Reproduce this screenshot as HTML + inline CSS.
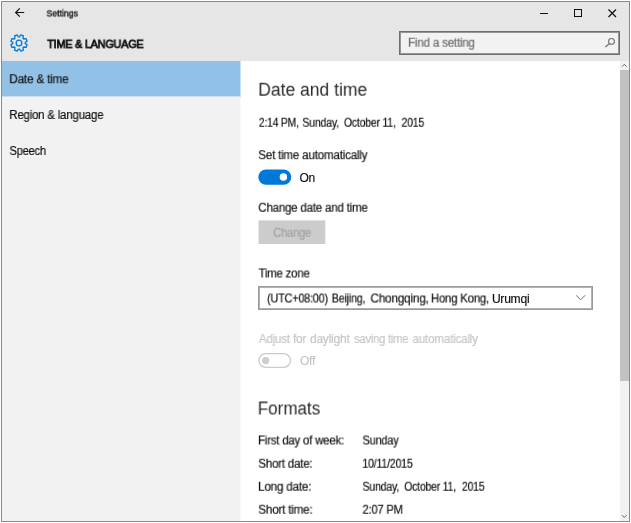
<!DOCTYPE html>
<html><head><meta charset="utf-8"><title>Settings</title>
<style>
html,body{margin:0;padding:0;background:#fff;}
body{width:631px;height:523px;overflow:hidden;position:relative;font-family:"Liberation Sans",sans-serif;}
.abs{position:absolute;}
.t{will-change:transform;position:absolute;white-space:pre;line-height:1;transform-origin:0 0;font-family:"Liberation Sans",sans-serif;}
#win{left:1px;top:1px;width:627px;height:519px;border:1px solid #4e9ad9;background:#fff;box-sizing:content-box;}
#hdr{left:2px;top:2px;width:627px;height:59px;background:#e6e6e6;}
#side{left:2px;top:61px;width:238px;height:460px;background:#f2f2f2;border-right:1px solid #f8f8f8;}
#sel{left:2px;top:61px;width:238px;height:35px;background:#91c1e7;border-right:1px solid #c8e0f3;border-bottom:1px solid #cbdeee;}
#sbar{left:620px;top:61px;width:9px;height:460px;background:#f2f2f2;}
#thumb{left:620px;top:70px;width:9px;height:311px;background:#c2c2c2;}
#search{left:399px;top:31px;width:221px;height:24px;box-sizing:border-box;background:#f2f2f2;box-shadow:inset 0 0 0 1px #6e6e6e, inset 0 0 0 2px rgba(110,110,110,0.7);}
#selbox{left:258px;top:286px;width:335px;height:24px;box-sizing:border-box;background:#fff;box-shadow:inset 0 0 0 1px #999, inset 0 0 0 2px rgba(153,153,153,0.75);}
svg{position:absolute;overflow:visible;}
</style></head><body>
<div id="win" class="abs"></div>
<div id="hdr" class="abs"></div>
<div id="side" class="abs"></div>
<div id="sel" class="abs"></div>
<div id="sbar" class="abs"></div>
<div id="thumb" class="abs"></div>
<div id="search" class="abs"></div>
<div id="selbox" class="abs"></div>

<!-- shapes -->
<svg style="left:0;top:0" width="631" height="523" viewBox="0 0 631 523">
<rect x="258.3" y="169.4" width="33" height="15.3" rx="7.65" fill="#0078d7"/>
<circle cx="283.4" cy="177.05" r="3.75" fill="#fff"/>
<rect x="258.5" y="220.4" width="66.8" height="23.6" fill="#cccccc"/>
<rect x="258.9" y="353.7" width="31.6" height="13.6" rx="6.8" fill="#fff" stroke="#cbcbcb" stroke-width="1.3"/>
<circle cx="265.7" cy="360.6" r="3.6" fill="#cdcdcd"/>
</svg>
<!-- back arrow -->
<svg style="left:15px;top:8px" width="10" height="9" viewBox="0 0 10 9"><path d="M9.2 4.5H0.6M4.8 0.3L0.6 4.5L4.8 8.7" fill="none" stroke="#111" stroke-width="1.2"/></svg>
<!-- window controls -->
<svg style="left:540px;top:8px" width="80" height="10" viewBox="0 0 80 10">
<path d="M0 5.5H8" stroke="#111" stroke-width="1" fill="none"/>
<rect x="34.5" y="1.5" width="7" height="7" stroke="#111" stroke-width="1" fill="none"/>
<path d="M68.5 1.5L76 9M76 1.5L68.5 9" stroke="#111" stroke-width="1.2" fill="none"/>
</svg>
<!-- gear -->
<svg style="left:10.3px;top:33.5px" width="18" height="18" viewBox="0 0 18 18"><path fill="none" stroke="#0078d7" stroke-width="1.3" stroke-linejoin="round" d="M9.53 2.82L10.87 0.91L13.39 1.96L12.99 4.25L13.75 5.01L16.04 4.61L17.09 7.13L15.18 8.47L15.18 9.53L17.09 10.87L16.04 13.39L13.75 12.99L12.99 13.75L13.39 16.04L10.87 17.09L9.53 15.18L8.47 15.18L7.13 17.09L4.61 16.04L5.01 13.75L4.25 12.99L1.96 13.39L0.91 10.87L2.82 9.53L2.82 8.47L0.91 7.13L1.96 4.61L4.25 5.01L5.01 4.25L4.61 1.96L7.13 0.91L8.47 2.82Z"/><circle cx="9" cy="9" r="2.85" fill="none" stroke="#0078d7" stroke-width="1.3"/></svg>
<!-- magnifier -->
<svg style="left:605px;top:38px" width="10" height="10" viewBox="0 0 10 10"><circle cx="6.5" cy="3.4" r="2.9" fill="none" stroke="#727272" stroke-width="1.1"/><path d="M4.5 5.5L0.4 9" stroke="#727272" stroke-width="1.2" fill="none"/></svg>
<!-- chevron -->
<svg style="left:575.8px;top:295px" width="9.4" height="5.2" viewBox="0 0 9.4 5.2"><path d="M0.2 0.3L4.7 4.8L9.2 0.3" fill="none" stroke="#666" stroke-width="1"/></svg>
<!-- scrollbar arrows -->
<svg style="left:622.3px;top:63.8px" width="4.6" height="2.8" viewBox="0 0 4.6 2.8"><path d="M0 2.6L2.3 0.3L4.6 2.6" fill="none" stroke="#555" stroke-width="0.9"/></svg>
<svg style="left:622.3px;top:515.2px" width="4.6" height="2.8" viewBox="0 0 4.6 2.8"><path d="M0 0.2L2.3 2.5L4.6 0.2" fill="none" stroke="#555" stroke-width="0.9"/></svg>

<span class="t" style="left:45px;top:6px;font-size:9.8px;color:#000;-webkit-text-stroke:0.3px #000;transform:translate(1.45px,2.40px) scaleX(0.8914)">Settings</span>
<span class="t" style="left:46px;top:36px;font-size:11.2px;color:#111;-webkit-text-stroke:0.8px #111;letter-spacing:-0.25px;transform:translate(1.25px,2.85px) scaleX(0.9733)">TIME &amp; LANGUAGE</span>
<span class="t" style="left:407px;top:35px;font-size:12px;color:#6b6b6b;-webkit-text-stroke:0.18px #6b6b6b;letter-spacing:-0.25px;transform:translate(1.00px,1.75px) scaleX(0.9741)">Find a setting</span>
<span class="t" style="left:9px;top:72px;font-size:12px;color:#111;-webkit-text-stroke:0.18px #111;letter-spacing:-0.25px;transform:translate(0.25px,1.25px) scaleX(0.9873)">Date &amp; time</span>
<span class="t" style="left:9px;top:107px;font-size:12px;color:#111;-webkit-text-stroke:0.18px #111;letter-spacing:-0.25px;transform:translate(0.25px,2.00px) scaleX(0.9613)">Region &amp; language</span>
<span class="t" style="left:9px;top:143px;font-size:12px;color:#111;-webkit-text-stroke:0.18px #111;letter-spacing:-0.25px;transform:translate(0.50px,2.00px) scaleX(0.9281)">Speech</span>
<span class="t" style="left:258px;top:79px;font-size:17.6px;color:#2a2a2a;transform:translate(0.25px,2.70px) scaleX(0.9944)">Date and time</span>
<span class="t" style="left:258px;top:115px;font-size:12px;color:#111;-webkit-text-stroke:0.18px #111;letter-spacing:-0.25px;transform:translate(0.85px,1.70px) scaleX(0.8637)">2:14 PM, </span>
<span class="t" style="left:301px;top:115px;font-size:12px;color:#111;-webkit-text-stroke:0.18px #111;letter-spacing:-0.25px;transform:translate(1.35px,1.70px) scaleX(0.8820)">Sunday, </span>
<span class="t" style="left:343px;top:115px;font-size:12px;color:#111;-webkit-text-stroke:0.18px #111;letter-spacing:-0.25px;transform:translate(0.90px,1.70px) scaleX(0.8762)">October 11, </span>
<span class="t" style="left:401px;top:115px;font-size:12px;color:#111;-webkit-text-stroke:0.18px #111;letter-spacing:-0.25px;transform:translate(0.50px,1.70px) scaleX(0.8760)">2015</span>
<span class="t" style="left:257px;top:148px;font-size:12px;color:#111;-webkit-text-stroke:0.18px #111;letter-spacing:-0.25px;transform:translate(1.25px,1.15px) scaleX(0.9732)">Set time automatically</span>
<span class="t" style="left:299px;top:170px;font-size:12px;color:#111;-webkit-text-stroke:0.18px #111;letter-spacing:-0.25px;transform:translate(0.50px,1.75px) scaleX(1.0000)">On</span>
<span class="t" style="left:257px;top:200px;font-size:12px;color:#111;-webkit-text-stroke:0.18px #111;letter-spacing:-0.25px;transform:translate(1.25px,1.75px) scaleX(0.9667)">Change date and time</span>
<span class="t" style="left:272px;top:225px;font-size:12px;color:#a0a0a0;-webkit-text-stroke:0.18px #a0a0a0;letter-spacing:-0.25px;transform:translate(1.25px,1.75px) scaleX(0.9308)">Change</span>
<span class="t" style="left:257px;top:266px;font-size:12px;color:#111;-webkit-text-stroke:0.18px #111;letter-spacing:-0.25px;transform:translate(1.50px,1.50px) scaleX(0.9573)">Time zone</span>
<span class="t" style="left:266px;top:291px;font-size:12px;color:#111;-webkit-text-stroke:0.18px #111;letter-spacing:-0.25px;transform:translate(1.00px,1.50px) scaleX(0.9095)">(UTC+08:00) </span>
<span class="t" style="left:331px;top:291px;font-size:12px;color:#111;-webkit-text-stroke:0.18px #111;letter-spacing:-0.25px;transform:translate(0.70px,1.50px) scaleX(0.9008)">Beijing, </span>
<span class="t" style="left:369px;top:291px;font-size:12px;color:#111;-webkit-text-stroke:0.18px #111;letter-spacing:-0.25px;transform:translate(1.45px,1.50px) scaleX(0.9862)">Chongqing, </span>
<span class="t" style="left:430px;top:291px;font-size:12px;color:#111;-webkit-text-stroke:0.18px #111;letter-spacing:-0.25px;transform:translate(0.85px,1.50px) scaleX(0.9555)">Hong Kong, </span>
<span class="t" style="left:491px;top:291px;font-size:12px;color:#111;-webkit-text-stroke:0.18px #111;letter-spacing:-0.25px;transform:translate(0.90px,1.50px) scaleX(1.0070)">Urumqi</span>
<span class="t" style="left:257px;top:331px;font-size:12px;color:#c6c6c6;-webkit-text-stroke:0.18px #c6c6c6;letter-spacing:-0.25px;transform:translate(1.75px,2.00px) scaleX(0.9793)">Adjust for </span>
<span class="t" style="left:309px;top:331px;font-size:12px;color:#c6c6c6;-webkit-text-stroke:0.18px #c6c6c6;letter-spacing:-0.25px;transform:translate(0.95px,2.00px) scaleX(1.0052)">daylight </span>
<span class="t" style="left:353px;top:331px;font-size:12px;color:#c6c6c6;-webkit-text-stroke:0.18px #c6c6c6;letter-spacing:-0.25px;transform:translate(1.10px,2.00px) scaleX(0.9339)">saving time </span>
<span class="t" style="left:411px;top:331px;font-size:12px;color:#c6c6c6;-webkit-text-stroke:0.18px #c6c6c6;letter-spacing:-0.25px;transform:translate(1.45px,2.00px) scaleX(0.9782)">automatically</span>
<span class="t" style="left:299px;top:353px;font-size:12px;color:#c6c6c6;-webkit-text-stroke:0.18px #c6c6c6;letter-spacing:-0.25px;transform:translate(1.00px,2.00px) scaleX(1.0000)">Off</span>
<span class="t" style="left:258px;top:398px;font-size:17.6px;color:#2a2a2a;transform:translate(-0.25px,2.50px) scaleX(0.9680)">Formats</span>
<span class="t" style="left:257px;top:433px;font-size:12px;color:#111;-webkit-text-stroke:0.18px #111;letter-spacing:-0.25px;transform:translate(1.00px,1.50px) scaleX(0.9602)">First day of week:</span>
<span class="t" style="left:257px;top:456px;font-size:12px;color:#111;-webkit-text-stroke:0.18px #111;letter-spacing:-0.25px;transform:translate(1.25px,1.75px) scaleX(0.9680)">Short date:</span>
<span class="t" style="left:257px;top:479px;font-size:12px;color:#111;-webkit-text-stroke:0.18px #111;letter-spacing:-0.25px;transform:translate(1.00px,1.75px) scaleX(0.9810)">Long date:</span>
<span class="t" style="left:257px;top:502px;font-size:12px;color:#111;-webkit-text-stroke:0.18px #111;letter-spacing:-0.25px;transform:translate(1.25px,1.75px) scaleX(0.9815)">Short time:</span>
<span class="t" style="left:362px;top:433px;font-size:12px;color:#111;-webkit-text-stroke:0.18px #111;letter-spacing:-0.25px;transform:translate(0.50px,1.50px) scaleX(0.9167)">Sunday</span>
<span class="t" style="left:362px;top:456px;font-size:12px;color:#111;-webkit-text-stroke:0.18px #111;letter-spacing:-0.25px;transform:translate(0.25px,1.75px) scaleX(0.8879)">10/11/2015</span>
<span class="t" style="left:362px;top:479px;font-size:12px;color:#111;-webkit-text-stroke:0.18px #111;letter-spacing:-0.25px;transform:translate(0.50px,1.75px) scaleX(0.8820)">Sunday, </span>
<span class="t" style="left:403px;top:479px;font-size:12px;color:#111;-webkit-text-stroke:0.18px #111;letter-spacing:-0.25px;transform:translate(1.30px,1.75px) scaleX(0.8719)">October 11, </span>
<span class="t" style="left:461px;top:479px;font-size:12px;color:#111;-webkit-text-stroke:0.18px #111;letter-spacing:-0.25px;transform:translate(0.90px,1.75px) scaleX(0.8740)">2015</span>
<span class="t" style="left:362px;top:502px;font-size:12px;color:#111;-webkit-text-stroke:0.18px #111;letter-spacing:-0.25px;transform:translate(0.50px,1.75px) scaleX(0.9341)">2:07 PM</span>
</body></html>
